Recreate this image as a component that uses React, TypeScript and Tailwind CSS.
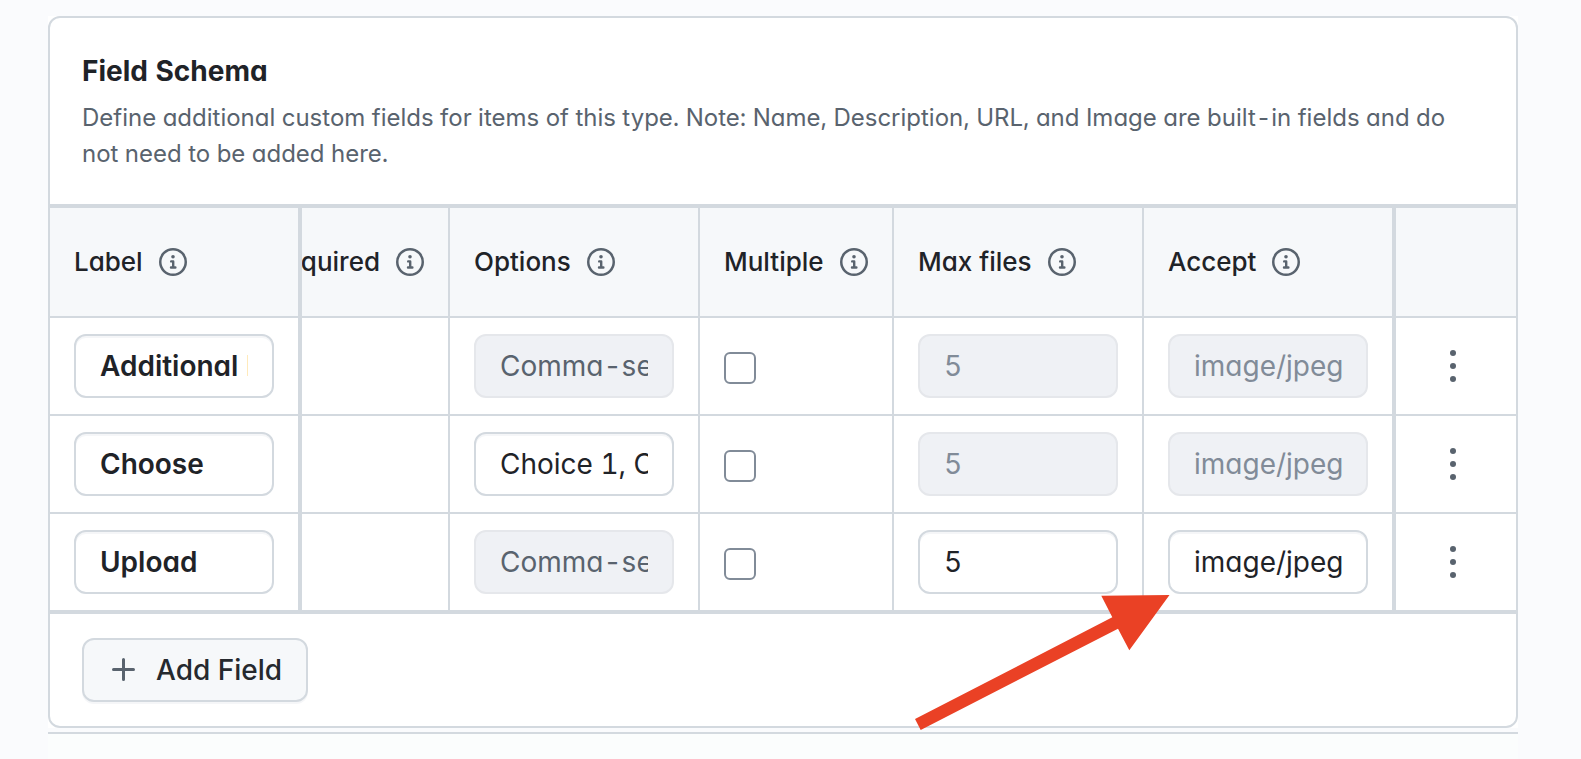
import { useState } from 'react'

interface Field {
  id: string
  label: string
  options: string | null
  multiple: boolean
  maxFiles: string
  accept: string
  isUpload: boolean
}

const initialFields: Field[] = [
  {
    id: 'additional-info',
    label: 'Additional Information',
    options: null,
    multiple: false,
    maxFiles: '5',
    accept: 'image/jpeg',
    isUpload: false,
  },
  {
    id: 'choose',
    label: 'Choose',
    options: 'Choice 1, Choice 2',
    multiple: false,
    maxFiles: '5',
    accept: 'image/jpeg',
    isUpload: false,
  },
  {
    id: 'upload',
    label: 'Upload',
    options: null,
    multiple: false,
    maxFiles: '5',
    accept: 'image/jpeg',
    isUpload: true,
  },
]

const inputBase =
  'block h-16 w-full rounded-xl border-2 px-6 text-[28px] leading-[42px] outline-none'
const inputEnabled =
  'border-[#d3d9df] bg-white text-[#1f2328] shadow-[inset_0_2px_0_#f5f6f8]'
const inputDisabled =
  'border-[#e5e7eb] bg-[#eff1f5] text-[#818b98] placeholder:text-[#59636e]'

function InfoIcon() {
  return (
    <svg
      viewBox="0 0 28 28"
      className="size-7 shrink-0 text-[#59636e]"
      fill="none"
      stroke="currentColor"
      aria-hidden="true"
    >
      <circle cx="14" cy="14" r="12.75" strokeWidth="2.5" />
      <circle cx="14" cy="8.8" r="1.8" fill="currentColor" stroke="none" />
      <path
        d="M12.2 13.4H14.2V19.4M12 19.5H16.4"
        strokeWidth="2.4"
        strokeLinecap="round"
        strokeLinejoin="round"
      />
    </svg>
  )
}

function HeaderCell({ title, className = 'border-r-2' }: { title: string; className?: string }) {
  return (
    <th scope="col" className={`h-[110px] border-b-2 border-[#d3d9df] p-0 font-medium ${className}`}>
      <div className="flex items-center gap-4 px-6">
        <span className="whitespace-nowrap">{title}</span>
        <InfoIcon />
      </div>
    </th>
  )
}

function FieldRow({
  field,
  last,
  onChange,
}: {
  field: Field
  last: boolean
  onChange: (patch: Partial<Field>) => void
}) {
  const cell = `border-[#d3d9df] px-6 py-4 ${last ? 'border-b-4' : 'border-b-2'}`

  return (
    <tr>
      <td className={`${cell} border-r-4`}>
        <input
          type="text"
          aria-label="Label"
          className={`${inputBase} ${inputEnabled} font-semibold`}
          value={field.label}
          onChange={(e) => onChange({ label: e.target.value })}
        />
      </td>
      <td className={`${cell} border-r-2`} />
      <td className={`${cell} border-r-2`}>
        <input
          type="text"
          aria-label={`Options for ${field.label}`}
          className={`${inputBase} ${field.options === null ? inputDisabled : inputEnabled}`}
          placeholder="Comma-separated"
          disabled={field.options === null}
          value={field.options ?? ''}
          onChange={(e) => onChange({ options: e.target.value })}
        />
      </td>
      <td className={`${cell} border-r-2`}>
        <div className="flex pt-1">
          <input
            type="checkbox"
            aria-label={`Multiple for ${field.label}`}
            className="size-8 appearance-none rounded-md border-2 border-[#818b98] bg-white checked:bg-[#0969da]"
            checked={field.multiple}
            onChange={(e) => onChange({ multiple: e.target.checked })}
          />
        </div>
      </td>
      <td className={`${cell} border-r-2`}>
        <input
          type="text"
          inputMode="numeric"
          aria-label={`Max files for ${field.label}`}
          className={`${inputBase} ${field.isUpload ? inputEnabled : inputDisabled}`}
          disabled={!field.isUpload}
          value={field.maxFiles}
          onChange={(e) => onChange({ maxFiles: e.target.value })}
        />
      </td>
      <td className={`${cell} border-r-4`}>
        <input
          type="text"
          aria-label={`Accept for ${field.label}`}
          className={`${inputBase} ${field.isUpload ? inputEnabled : inputDisabled}`}
          disabled={!field.isUpload}
          value={field.accept}
          onChange={(e) => onChange({ accept: e.target.value })}
        />
      </td>
      <td className={cell}>
        <button
          type="button"
          aria-label={`Actions for ${field.label}`}
          className="flex h-16 w-[66px] items-center justify-center rounded-xl text-[#59636e]"
        >
          <svg viewBox="0 0 32 32" className="size-8" fill="currentColor" aria-hidden="true">
            <circle cx="16" cy="3" r="3" />
            <circle cx="16" cy="16" r="3" />
            <circle cx="16" cy="29" r="3" />
          </svg>
        </button>
      </td>
    </tr>
  )
}

export default function App() {
  const [fields, setFields] = useState(initialFields)

  const updateField = (id: string, patch: Partial<Field>) => {
    setFields((prev) => prev.map((f) => (f.id === id ? { ...f, ...patch } : f)))
  }

  const addField = () => {
    setFields((prev) => [
      ...prev,
      {
        id: `field-${prev.length + 1}`,
        label: '',
        options: null,
        multiple: false,
        maxFiles: '5',
        accept: 'image/jpeg',
        isUpload: false,
      },
    ])
  }

  return (
    <main className="flex min-h-screen flex-col bg-[#fafbfd] pt-4 pr-[63px] pl-12 font-['Inter',sans-serif] text-[#1f2328] [font-feature-settings:'tnum','cv11']">
      <div className="bg-white">
        <section className="relative rounded-xl border-2 border-[#d3d9df] bg-white">
          <div className="border-b-4 border-[#d3d9df] p-8">
            <h2 className="text-[28px] leading-[42px] font-bold">Field Schema</h2>
            <p className="mt-2 text-2xl leading-9 text-[#59636e]">
              Define additional custom fields for items of this type. Note: Name, Description, URL,
              and Image are built-in fields and do not need to be added here.
            </p>
          </div>

          <table className="w-full table-fixed border-separate border-spacing-0 text-left">
            <colgroup>
              <col className="w-[252px]" />
              <col className="w-[148px]" />
              <col className="w-[250px]" />
              <col className="w-[194px]" />
              <col className="w-[250px]" />
              <col className="w-[252px]" />
              <col className="w-[120px]" />
            </colgroup>
            <thead className="bg-[#f6f8fa] text-[26px] leading-10">
              <tr>
                <HeaderCell title="Label" className="border-r-4" />
                <th
                  scope="col"
                  className="h-[110px] border-r-2 border-b-2 border-[#d3d9df] p-0 font-medium"
                >
                  <div className="flex items-center justify-end gap-4 overflow-hidden pr-6">
                    <span>Required</span>
                    <InfoIcon />
                  </div>
                </th>
                <HeaderCell title="Options" />
                <HeaderCell title="Multiple" />
                <HeaderCell title="Max files" />
                <HeaderCell title="Accept" className="border-r-4" />
                <td className="border-b-2 border-[#d3d9df]" />
              </tr>
            </thead>
            <tbody>
              {fields.map((field, i) => (
                <FieldRow
                  key={field.id}
                  field={field}
                  last={i === fields.length - 1}
                  onChange={(patch) => updateField(field.id, patch)}
                />
              ))}
            </tbody>
          </table>

          <div className="px-8 py-6">
            <button
              type="button"
              onClick={addField}
              className="flex h-16 items-center gap-4 rounded-xl border-2 border-[#d3d9df] bg-[#f6f8fa] px-6 text-[28px] leading-[42px] font-medium text-[#25292e] shadow-[0_2px_0_#f5f6f8]"
            >
              <svg
                viewBox="0 0 32 32"
                className="size-8 text-[#59636e]"
                fill="none"
                stroke="currentColor"
                strokeWidth="3"
                strokeLinecap="round"
                aria-hidden="true"
              >
                <path d="M15.5 5.5V25.5M5.5 15.5H25.5" />
              </svg>
              Add Field
            </button>
          </div>

          {/* callout arrow pointing at the Accept input */}
          <svg
            viewBox="0 0 256 136"
            className="pointer-events-none absolute right-[346px] -bottom-1 h-[136px] w-64"
            aria-hidden="true"
          >
            <path
              d="M187.3 1.7L255.5 1L215.3 56.3L204 34.7L6.7 136L1 125L198.3 23.3Z"
              fill="#ea4125"
            />
          </svg>
        </section>
      </div>

      <div className="mt-1 flex-1 border-t-2 border-[#d3d9df] bg-[#fbfdfd]" />
    </main>
  )
}
